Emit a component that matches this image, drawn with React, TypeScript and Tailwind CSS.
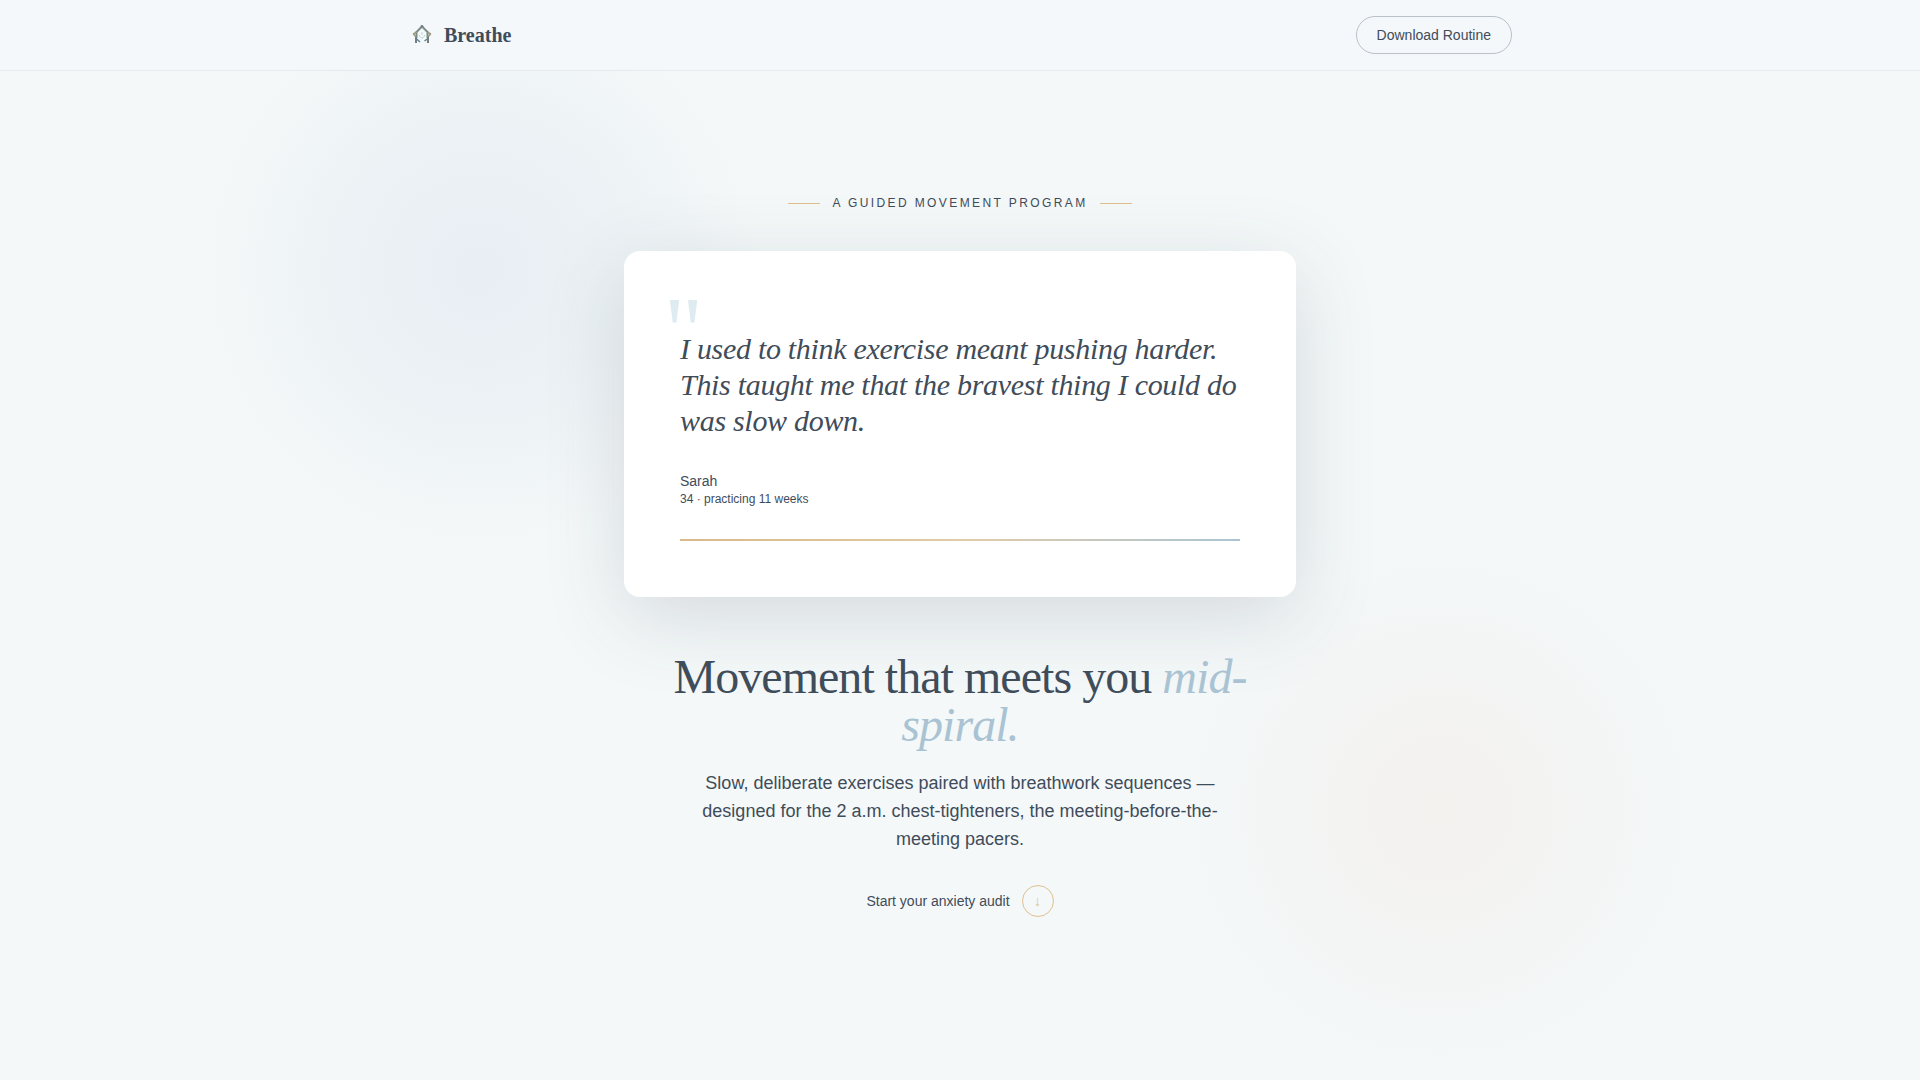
function Logo() {
	return (
		<svg viewBox="0 0 28 28" className="h-7 w-7" fill="none" aria-hidden="true">
			<path d="M14 5.5 8.5 11v6M14 5.5l5.5 5.5v6" stroke="#7d8b87" strokeWidth="2" strokeLinejoin="round" />
			<path d="M8.5 11 5.5 13l2.5 3M19.5 11l3 2-2.5 3" stroke="#9c9884" strokeWidth="1.6" strokeLinejoin="round" />
			<path d="M8 16v6M20 16v6" stroke="#6f8178" strokeWidth="2" />
			<path d="M8 17.5 12 21M20 17.5 16.5 20" stroke="#5d7f9a" strokeWidth="1.5" />
			<path d="M11 14c1 2 2 3 3 3s2-1 3-3M14 11v3" stroke="#b9d6cf" strokeWidth="1" />
			<circle cx="14" cy="5.2" r="1.3" fill="#6f7d85" />
		</svg>
	);
}

function Header() {
	return (
		<header className="border-b border-[#e4eaee] bg-[#f4f8fb]">
			<div className="mx-auto flex max-w-6xl items-center justify-between px-6 py-4">
				<a href="#top" className="flex items-center gap-2 font-['Liberation_Serif',serif] text-xl leading-7 font-bold">
					<Logo />
					Breathe
				</a>
				<button type="button" className="rounded-full border border-[#b9c2c8] px-5 py-2 text-sm">
					Download Routine
				</button>
			</div>
		</header>
	);
}

function Testimonial() {
	return (
		<figure className="w-full max-w-2xl rounded-2xl bg-white p-14 shadow-[0_20px_80px_rgba(61,72,82,0.17)]">
			<blockquote className="relative pt-6 font-['Liberation_Serif',serif] text-3xl leading-9 tracking-[-0.01em] italic">
				<span className="absolute -top-6 -left-4 text-8xl leading-none text-[#deebf0] not-italic" aria-hidden="true">
					"
				</span>
				<p>I used to think exercise meant pushing harder. This taught me that the bravest thing I could do was slow down.</p>
			</blockquote>
			<figcaption className="mt-8">
				<div className="text-sm">Sarah</div>
				<div className="text-xs">34 · practicing 11 weeks</div>
			</figcaption>
			<div className="mt-8 h-0.5 bg-linear-to-r from-[#d9b98a] via-[#e2cba6] to-[#a9c5d3]" />
		</figure>
	);
}

export default function App() {
	return (
		<div id="top" className="min-h-screen bg-[#f4f8f9] font-['Liberation_Sans',sans-serif] text-[#3f4c5a]">
			<div className="min-h-screen bg-[radial-gradient(circle_280px_at_25%_25%,#e8eef4,#ebf1f4_40%,transparent),radial-gradient(circle_260px_at_75%_75%,#f3f2ef,#f3f3f2_40%,transparent)]">
				<Header />
				<main className="flex flex-col items-center px-6 pt-31 pb-40 text-center">
					<div className="mb-10 flex items-center gap-3 text-xs tracking-[0.2em]">
						<span className="h-px w-8 bg-[#e0bf8c]" />
						A GUIDED MOVEMENT PROGRAM
						<span className="h-px w-8 bg-[#e0bf8c]" />
					</div>
					<div className="flex w-full justify-center text-left">
						<Testimonial />
					</div>
					<h1 className="mt-14 max-w-2xl font-['Liberation_Serif',serif] text-5xl leading-none tracking-[-0.02em]">
						Movement that meets you <em className="text-[#a9c3d3]">mid-spiral.</em>
					</h1>
					<p className="mt-5 max-w-[560px] text-lg leading-7">
						Slow, deliberate exercises paired with breathwork sequences — designed for the 2 a.m. chest-tighteners, the
						meeting-before-the-meeting pacers.
					</p>
					<a href="#audit" className="mt-8 flex items-center gap-3 text-sm">
						Start your anxiety audit
						<span className="flex h-8 w-8 items-center justify-center rounded-full border border-[#e0c08f] text-[#e0c08f]">
							↓
						</span>
					</a>
				</main>
			</div>
		</div>
	);
}
